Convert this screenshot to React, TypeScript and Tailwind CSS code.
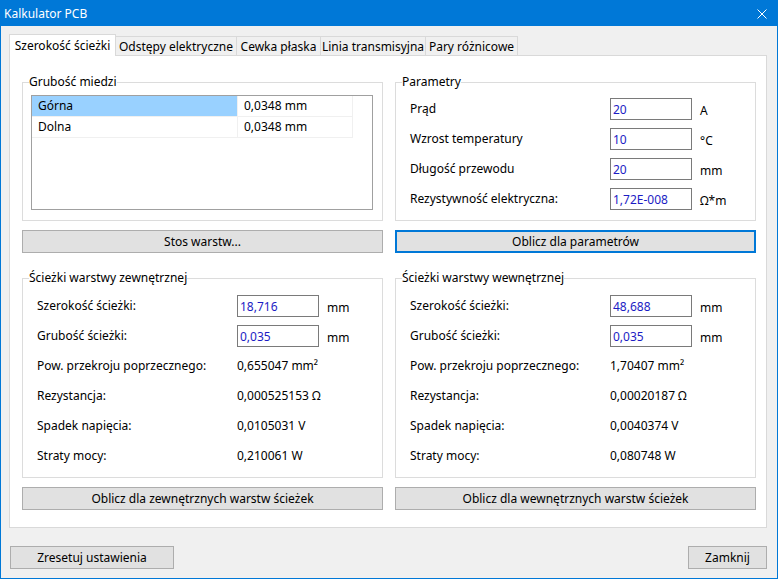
import type { ReactNode } from "react";

type Row = [string, string, string?];

const params: Row[] = [
  ["Prąd", "20", "A"],
  ["Wzrost temperatury", "10", "°C"],
  ["Długość przewodu", "20", "mm"],
  ["Rezystywność elektryczna:", "1,72E-008", "Ω*m"],
];

const outerInputs: Row[] = [
  ["Szerokość ścieżki:", "18,716", "mm"],
  ["Grubość ścieżki:", "0,035", "mm"],
];

const outerValues: Row[] = [
  ["Pow. przekroju poprzecznego:", "0,655047 mm²"],
  ["Rezystancja:", "0,000525153 Ω"],
  ["Spadek napięcia:", "0,0105031 V"],
  ["Straty mocy:", "0,210061 W"],
];

const innerInputs: Row[] = [
  ["Szerokość ścieżki:", "48,688", "mm"],
  ["Grubość ścieżki:", "0,035", "mm"],
];

const innerValues: Row[] = [
  ["Pow. przekroju poprzecznego:", "1,70407 mm²"],
  ["Rezystancja:", "0,00020187 Ω"],
  ["Spadek napięcia:", "0,0040374 V"],
  ["Straty mocy:", "0,080748 W"],
];

const tabs = [
  { label: "Szerokość ścieżki", width: "w-[107px]" },
  { label: "Odstępy elektryczne", width: "w-[121px]" },
  { label: "Cewka płaska", width: "w-[84px]" },
  { label: "Linia transmisyjna", width: "w-[105px]" },
  { label: "Pary różnicowe", width: "w-[92px]" },
];

function GroupBox({ title, className, children }: { title: string; className: string; children: ReactNode }) {
  return (
    <fieldset className={`border border-[#dcdcdc] ${className}`}>
      <legend className="ml-[6px] leading-[16px]">{title}</legend>
      {children}
    </fieldset>
  );
}

function Button({ label, focused = false, className = "" }: { label: string; focused?: boolean; className?: string }) {
  return (
    <button
      className={`flex h-[23px] items-center justify-center bg-[#e1e1e1] leading-[16px] text-black ${
        focused ? "border-2 border-[#0078d7]" : "border border-[#adadad]"
      } ${className}`}
    >
      {label}
    </button>
  );
}

function InputRow({ row }: { row: Row }) {
  const [label, value, unit] = row;
  return (
    <div className="flex h-[30px] items-center pl-[14px]">
      <span className="w-[200px]">{label}</span>
      <input
        readOnly
        value={value}
        className="h-[22px] w-[82px] border border-[#7a7a7a] bg-white px-[2px] text-[#1c1cc4] outline-none"
      />
      <span className="ml-[8px] pt-[4px]">{unit}</span>
    </div>
  );
}

function ValueRow({ row }: { row: Row }) {
  const [label, value] = row;
  return (
    <div className="flex h-[30px] items-center pl-[14px]">
      <span className="w-[200px]">{label}</span>
      <span>{value}</span>
    </div>
  );
}

function LayerGroup({ title, inputs, values }: { title: string; inputs: Row[]; values: Row[] }) {
  return (
    <GroupBox title={title} className="mt-[17px] h-[208px]">
      <div className="mt-[5px]">
        {inputs.map((row) => (
          <InputRow key={row[0]} row={row} />
        ))}
        {values.map((row) => (
          <ValueRow key={row[0]} row={row} />
        ))}
      </div>
    </GroupBox>
  );
}

export default function App() {
  return (
    <div className="flex h-[579px] w-[778px] flex-col overflow-hidden border border-[#0078d7] bg-[#f0f0f0] font-['Noto_Sans',sans-serif] text-[12px] leading-[16px] text-black">
      <div className="flex h-[25px] shrink-0 items-center justify-between bg-[#0078d7] pl-[3px] pr-[10px] text-white">
        <span>Kalkulator PCB</span>
        <svg width="10" height="10" viewBox="0 0 10 10" className="mt-[1px]">
          <path d="M0.5 0.5 L9.5 9.5 M9.5 0.5 L0.5 9.5" stroke="white" strokeWidth="1" />
        </svg>
      </div>

      <div className="flex flex-col pl-[8px] pt-[8px]">
        <div className="flex items-end">
          {tabs.map((tab, i) =>
            i === 0 ? (
              <div
                key={tab.label}
                className={`relative z-10 -mb-px flex h-[22px] items-center justify-center border-x border-t border-[#d9d9d9] bg-white ${tab.width}`}
              >
                {tab.label}
              </div>
            ) : (
              <div
                key={tab.label}
                className={`flex h-[19px] items-center justify-center border-r border-t border-[#d9d9d9] bg-[#f0f0f0] pt-[1px] ${tab.width}`}
              >
                {tab.label}
              </div>
            )
          )}
        </div>

        <div className="flex h-[473px] w-[758px] gap-x-[12px] border border-[#d9d9d9] bg-white pl-[12px] pt-[18px]">
          <div className="flex w-[361px] flex-col">
            <GroupBox title="Grubość miedzi" className="h-[147px]">
              <div className="ml-[8px] mt-[5px] h-[115px] w-[342px] border border-[#a0a0a0] bg-white">
                {[
                  ["Górna", "0,0348 mm"],
                  ["Dolna", "0,0348 mm"],
                ].map(([name, value], i) => (
                  <div key={name} className="flex h-[21px] w-[321px] border-b border-[#f0f0f0]">
                    <div
                      className={`flex w-[206px] items-center border-r border-[#f0f0f0] pl-[6px] ${
                        i === 0 ? "bg-[#99d1ff]" : ""
                      }`}
                    >
                      {name}
                    </div>
                    <div className="flex w-[115px] items-center border-r border-[#f0f0f0] pl-[6px]">{value}</div>
                  </div>
                ))}
              </div>
            </GroupBox>
            <Button label="Stos warstw..." className="mt-[9px] w-[361px]" />
            <LayerGroup title="Ścieżki warstwy zewnętrznej" inputs={outerInputs} values={outerValues} />
            <Button label="Oblicz dla zewnętrznych warstw ścieżek" className="mt-[9px] w-[361px]" />
          </div>

          <div className="flex w-[361px] flex-col">
            <GroupBox title="Parametry" className="h-[147px]">
              <div className="mt-[4px]">
                {params.map((row) => (
                  <InputRow key={row[0]} row={row} />
                ))}
              </div>
            </GroupBox>
            <Button label="Oblicz dla parametrów" focused className="mt-[9px] w-[361px]" />
            <LayerGroup title="Ścieżki warstwy wewnętrznej" inputs={innerInputs} values={innerValues} />
            <Button label="Oblicz dla wewnętrznych warstw ścieżek" className="mt-[9px] w-[361px]" />
          </div>
        </div>

        <div className="mt-[18px] flex w-[758px] justify-between pl-[1px]">
          <Button label="Zresetuj ustawienia" className="w-[164px]" />
          <Button label="Zamknij" className="w-[79px]" />
        </div>
      </div>
    </div>
  );
}
